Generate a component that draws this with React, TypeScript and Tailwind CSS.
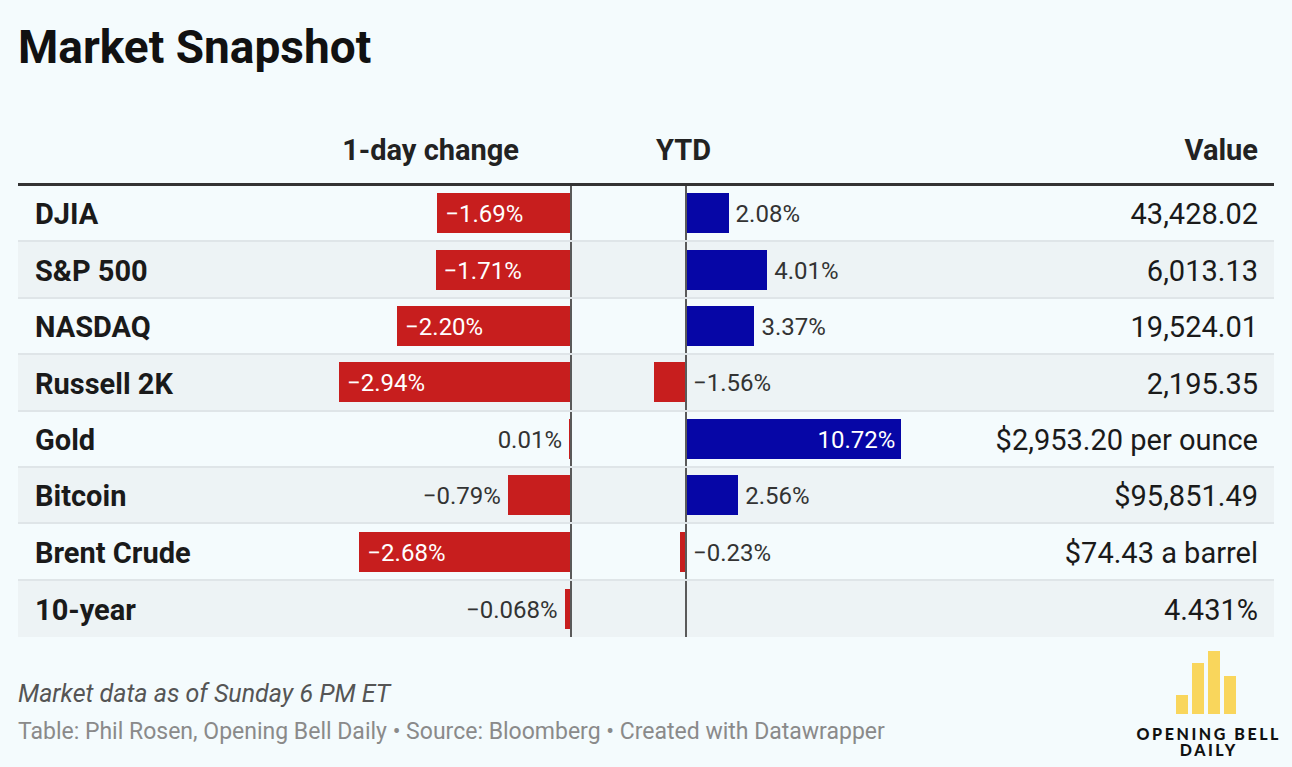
import React from "react";

type Row = {
  name: string;
  day: number;
  dayLabel: string;
  ytd: number | null;
  ytdLabel: string;
  value: string;
};

const rows: Row[] = [
  { name: "DJIA", day: -1.69, dayLabel: "−1.69%", ytd: 2.08, ytdLabel: "2.08%", value: "43,428.02" },
  { name: "S&P 500", day: -1.71, dayLabel: "−1.71%", ytd: 4.01, ytdLabel: "4.01%", value: "6,013.13" },
  { name: "NASDAQ", day: -2.2, dayLabel: "−2.20%", ytd: 3.37, ytdLabel: "3.37%", value: "19,524.01" },
  { name: "Russell 2K", day: -2.94, dayLabel: "−2.94%", ytd: -1.56, ytdLabel: "−1.56%", value: "2,195.35" },
  { name: "Gold", day: 0.01, dayLabel: "0.01%", ytd: 10.72, ytdLabel: "10.72%", value: "$2,953.20 per ounce" },
  { name: "Bitcoin", day: -0.79, dayLabel: "−0.79%", ytd: 2.56, ytdLabel: "2.56%", value: "$95,851.49" },
  { name: "Brent Crude", day: -2.68, dayLabel: "−2.68%", ytd: -0.23, ytdLabel: "−0.23%", value: "$74.43 a barrel" },
  { name: "10-year", day: -0.068, dayLabel: "−0.068%", ytd: null, ytdLabel: "", value: "4.431%" },
];

const DAY_SCALE = 78.6; // px per %
const YTD_SCALE = 20;

// 1-day change cell, bars grow left from the axis
const DayCell = ({ row }: { row: Row }) => {
  const w = Math.max(Math.abs(row.day) * DAY_SCALE, 1);
  const inside = w > 100;
  return (
    <div className="flex h-full w-[270px] items-center justify-end">
      {inside ? (
        <div
          className="flex h-[40px] items-center bg-[#c71e1e] pl-[8px] pt-[2px] text-[24px] text-white"
          style={{ width: w }}
        >
          {row.dayLabel}
        </div>
      ) : (
        <>
          <span className="mr-[7px] pt-[2px] text-[24px] text-[#333]">{row.dayLabel}</span>
          <div className="h-[40px] bg-[#c71e1e]" style={{ width: w }} />
        </>
      )}
    </div>
  );
};

// YTD cell with a negative area, an axis, and a positive area
const YtdCell = ({ row }: { row: Row }) => {
  const v = row.ytd;
  const w = v === null ? 0 : Math.max(Math.abs(v) * YTD_SCALE, 1);
  const inside = w > 150;
  return (
    <div className="flex h-full w-[420px] items-center">
      <div className="flex h-full w-[113px] items-center justify-end">
        {v !== null && v < 0 && <div className="h-[40px] bg-[#c71e1e]" style={{ width: w }} />}
      </div>
      <div className="h-full w-[2px] bg-[#5a5a5a]" />
      <div className="flex h-full flex-1 items-center">
        {v !== null && v > 0 && inside && (
          <div
            className="flex h-[40px] items-center justify-end bg-[#0606a6] pr-[6px] pt-[2px] text-[24px] text-white"
            style={{ width: w }}
          >
            {row.ytdLabel}
          </div>
        )}
        {v !== null && v > 0 && !inside && (
          <>
            <div className="h-[40px] bg-[#0606a6]" style={{ width: w }} />
            <span className="ml-[7px] pt-[2px] text-[24px] text-[#333]">{row.ytdLabel}</span>
          </>
        )}
        {v !== null && v < 0 && (
          <span className="ml-[6px] pt-[2px] text-[24px] text-[#333]">{row.ytdLabel}</span>
        )}
      </div>
    </div>
  );
};

const Logo = () => (
  <div className="-mr-[4px] flex flex-col items-center pt-[14px]">
    <svg width="60" height="63" viewBox="0 0 60 63" className="mr-[2px]">
      <rect x="0" y="44" width="12" height="19" fill="#f9d65c" />
      <rect x="16" y="12" width="12" height="51" fill="#f9d65c" />
      <rect x="32" y="0" width="12" height="63" fill="#f9d65c" />
      <rect x="48" y="25" width="12" height="38" fill="#f9d65c" />
    </svg>
    <div className="-mr-[3px] mt-[12px] text-center font-['Lato',sans-serif] text-[16px] font-black leading-[16px] tracking-[0.16em] text-[#111]">
      <div>OPENING BELL</div>
      <div>DAILY</div>
    </div>
  </div>
);

export default function App() {
  return (
    <div className="min-h-[767px] w-full bg-[#f4fbfd] px-[18px] font-['Roboto',sans-serif]">
      <h1 className="pt-[20px] text-[46px] font-bold leading-[54px] text-[#111]">Market Snapshot</h1>

      {/* header */}
      <div className="mt-[59px] flex border-b-[3px] border-[#333] pb-[16px] text-[29px] font-bold leading-[34px] text-[#222]">
        <div className="w-[282px]" />
        <div className="w-[272px] pr-[53px] text-right">1-day change</div>
        <div className="w-[420px] pl-[84px]">YTD</div>
        <div className="flex-1 pr-[16px] text-right">Value</div>
      </div>

      {/* rows */}
      <div>
        {rows.map((row, i) => (
          <div
            key={row.name}
            className={`flex h-[56.4px] items-center ${i % 2 === 1 ? "bg-[#edf3f5]" : "bg-[#f4fbfd]"} ${
              i < rows.length - 1 ? "border-b-2 border-[#dfe5e8]" : ""
            } text-[29px] text-[#1a1a1a]`}
          >
            <div className="w-[282px] pl-[17px] pt-[4px] font-bold">{row.name}</div>
            <DayCell row={row} />
            <div className="h-full w-[2px] bg-[#5a5a5a]" />
            <YtdCell row={row} />
            <div className="flex-1 pr-[16px] pt-[4px] text-right">{row.value}</div>
          </div>
        ))}
      </div>

      {/* footer */}
      <div className="flex items-start justify-between">
        <div className="pt-[38px] leading-[38px]">
          <div className="text-[25px] italic text-[#555]">Market data as of Sunday 6 PM ET</div>
          <div className="text-[23px] text-[#8a8a8a]">
            Table: Phil Rosen, Opening Bell Daily • Source: Bloomberg • Created with Datawrapper
          </div>
        </div>
        <Logo />
      </div>
    </div>
  );
}
